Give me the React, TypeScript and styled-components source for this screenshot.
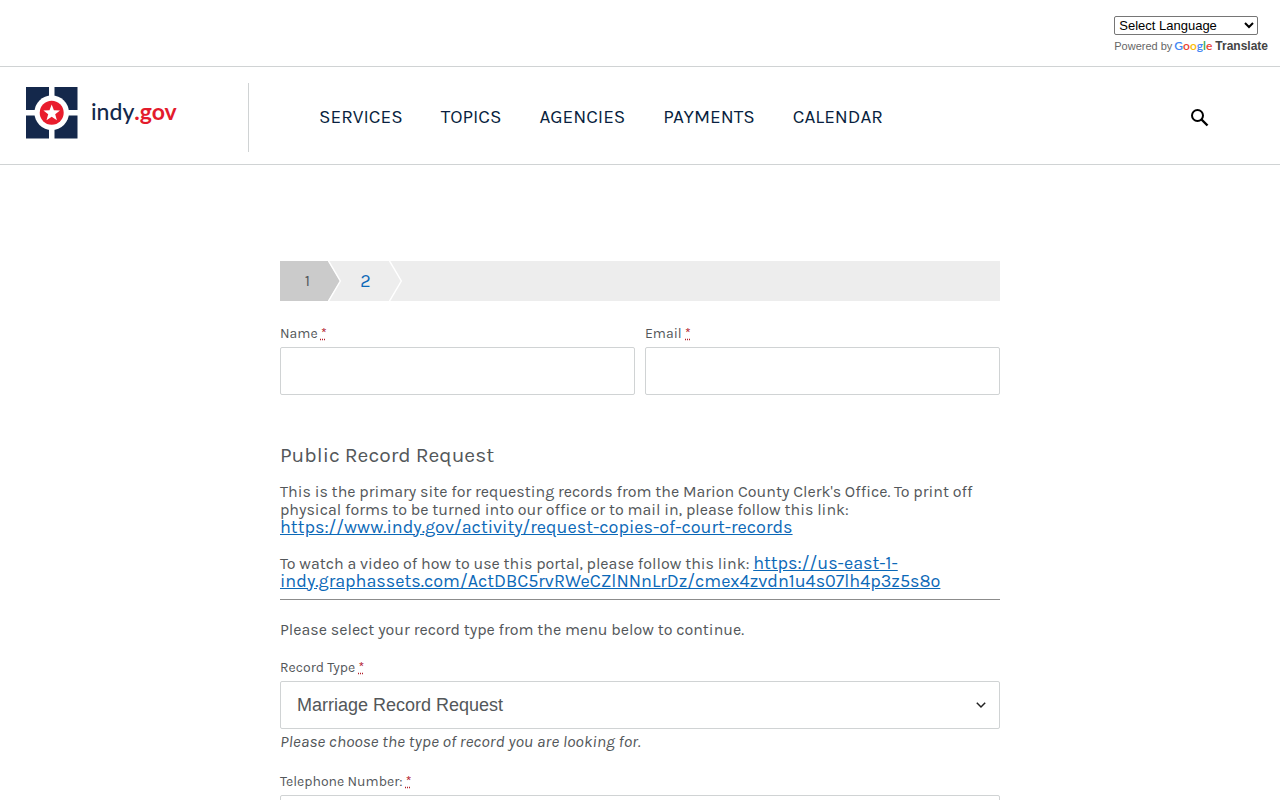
import React from "react";
import styled, { createGlobalStyle } from "styled-components";

const textFont = `Karla, Roboto, "Liberation Sans", sans-serif`;
const uiFont = `Arial, "Liberation Sans", sans-serif`;

const GlobalStyle = createGlobalStyle`
  *, *::before, *::after { box-sizing: border-box; }
  body {
    margin: 0;
    background: #fff;
    color: #53575a;
    font-family: ${textFont};
    font-size: 16px;
    line-height: 18px;
  }
`;

const LanguageBar = styled.div`
  display: flex;
  justify-content: flex-end;
  height: 67px;
  padding: 16px 12px 0 0;
  border-bottom: 1px solid #d0d3d4;
`;

const Translate = styled.div`
  display: flex;
  flex-direction: column;
  align-items: flex-start;
  gap: 3px;
  font-family: ${uiFont};
`;

const LanguageSelect = styled.select`
  width: 144px;
  height: 19px;
  padding: 0;
  border: 1px solid #767676;
  border-radius: 2px;
  background: #fff;
  color: #000;
  font-family: ${uiFont};
  font-size: 13px;
`;

const PoweredBy = styled.div`
  display: flex;
  align-items: baseline;
  height: 15px;
  color: #666;
  font-size: 11px;
  line-height: 15px;
  white-space: nowrap;
`;

const TranslateLink = styled.a`
  display: flex;
  align-items: baseline;
  gap: 3px;
  margin-left: 2px;
  color: #444;
  font-size: 12px;
  font-weight: bold;
  text-decoration: none;
`;

const GoogleWord = styled.span`
  font-family: Lato, sans-serif;
  font-size: 12px;
  font-weight: 600;
`;

const Letter = styled.span<{ $color: string }>`
  color: ${(p) => p.$color};
`;

const Header = styled.header`
  display: flex;
  align-items: center;
  height: 98px;
  padding: 3px 71px 0 25px;
  border-bottom: 1px solid #d0d3d4;
`;

const Brand = styled.a`
  display: flex;
  align-items: center;
  gap: 13px;
  width: 224px;
  height: 69px;
  padding-bottom: 10px;
  border-right: 1px solid #d0d3d4;
  text-decoration: none;
`;

const BrandName = styled.span`
  padding-bottom: 2px;
  color: #14284b;
  font-family: Lato, sans-serif;
  font-size: 23px;
  font-weight: 500;
  line-height: 30px;
`;

const BrandSuffix = styled.span`
  color: #e31b2c;
  font-weight: 700;
`;

const Nav = styled.nav`
  display: flex;
  flex: 1;
  gap: 38px;
  padding-left: 70px;
`;

const NavLink = styled.a`
  color: #091f40;
  font-size: 19px;
  line-height: 24px;
  text-decoration: none;
`;

const SearchButton = styled.button`
  display: flex;
  padding: 0;
  border: 0;
  background: none;
  color: #000;
`;

const Page = styled.main`
  width: 100%;
  max-width: 760px;
  margin: 0 auto;
  padding: 96px 20px 40px;
`;

const Steps = styled.ol`
  display: flex;
  height: 40px;
  margin: 0 0 24px;
  padding: 0;
  background: #ededed;
  list-style: none;
`;

const Step = styled.li<{ $current?: boolean }>`
  display: flex;
  color: ${(p) => (p.$current ? "#53575a" : "#0c69b8")};
  font-size: ${(p) => (p.$current ? 16 : 18)}px;
`;

const StepLabel = styled.button<{ $current?: boolean }>`
  width: 48px;
  padding: ${(p) => (p.$current ? "0 0 0 7px" : "0 0 0 1px")};
  border: 0;
  background: ${(p) => (p.$current ? "#cbcbcb" : "#ededed")};
  color: inherit;
  font: inherit;
`;

const Row = styled.div`
  display: grid;
  grid-template-columns: 1fr 1fr;
  gap: 10px;
  margin-bottom: 48px;
`;

const Field = styled.div`
  display: flex;
  flex-direction: column;
`;

const Label = styled.label`
  margin-bottom: 5px;
  font-size: 14px;
  line-height: 17px;
`;

const Required = styled.abbr`
  color: #b3202c;
  text-decoration: underline dotted #b3202c;
`;

const TextInput = styled.input`
  width: 100%;
  height: 48px;
  padding: 0 16px;
  border: 1px solid #d0d3d4;
  border-radius: 2px;
  background: #fff;
  color: #53575a;
  font-family: ${uiFont};
  font-size: 18px;
`;

const SelectBox = styled.div`
  display: grid;
  align-items: center;
  > * { grid-area: 1 / 1; }
  > svg { justify-self: end; margin-right: 14px; pointer-events: none; }
`;

const Dropdown = styled.select`
  appearance: none;
  width: 100%;
  height: 48px;
  padding: 0 16px;
  border: 1px solid #d0d3d4;
  border-radius: 2px;
  background: #fff;
  color: #53575a;
  font-family: ${uiFont};
  font-size: 18px;
`;

const Hint = styled.em`
  margin: 3px 0 23px;
  font-size: 17px;
`;

const Title = styled.h3`
  margin: 0 0 16px;
  font-size: 21px;
  font-weight: 400;
  line-height: 24px;
`;

const Paragraph = styled.p`
  margin: 0 0 18px;
`;

const TextLink = styled.a`
  color: #0c69b8;
  font-size: 18px;
  line-height: 16px;
`;

const Intro = styled.section`
  padding-bottom: 8px;
  border-bottom: 1px solid #8c8c8c;
  ${Paragraph}:last-child { margin-bottom: 0; }
`;

const Prompt = styled.p`
  margin: 21px 0 20px;
`;

function StepArrow({ current }: { current?: boolean }) {
  return (
    <svg width="13" height="40" viewBox="0 0 13 40" aria-hidden="true">
      <path d="M0 0L12 20L0 40Z" fill={current ? "#cbcbcb" : "#ededed"} />
      <path d="M0 -1L12.300 20L0 41" fill="none" stroke="#fff" strokeWidth="1.400" />
    </svg>
  );
}

function Seal() {
  return (
    <svg width="53" height="53" viewBox="0 0 53 53" aria-hidden="true">
      <path d="M1 1H24V24H1ZM29.500 1H52.500V24H29.500ZM1 29.500H24V52.500H1ZM29.500 29.500H52.500V52.500H29.500Z" fill="#14284b" />
      <circle cx="26.700" cy="26.700" r="17.300" fill="#fff" />
      <circle cx="26.700" cy="26.700" r="12" fill="#e91d2d" />
      <path d="M26.700 18.500L28.900 24.200L35 24.500L30.200 28.300L31.900 34.200L26.700 30.800L21.500 34.200L23.200 28.300L18.400 24.500L24.500 24.200Z" fill="#fff" />
    </svg>
  );
}

const navItems = ["Services", "Topics", "Agencies", "Payments", "Calendar"];
const google: [string, string][] = [
  ["G", "#4285f4"], ["o", "#ea4335"], ["o", "#fbbc05"],
  ["g", "#4285f4"], ["l", "#34a853"], ["e", "#ea4335"],
];

const Mark = () => <Required title="required">*</Required>;

export default function App() {
  return (
    <>
      <GlobalStyle />
      <LanguageBar>
        <Translate>
          <LanguageSelect aria-label="Language Translate Widget">
            <option>Select Language</option>
          </LanguageSelect>
          <PoweredBy>
            Powered by
            <TranslateLink href="#translate">
              <GoogleWord>
                {google.map(([ch, color], i) => (
                  <Letter key={i} $color={color}>{ch}</Letter>
                ))}
              </GoogleWord>
              Translate
            </TranslateLink>
          </PoweredBy>
        </Translate>
      </LanguageBar>
      <Header>
        <Brand href="#home">
          <Seal />
          <BrandName>indy<BrandSuffix>.gov</BrandSuffix></BrandName>
        </Brand>
        <Nav>
          {navItems.map((item) => (
            <NavLink key={item} href={`#${item.toLowerCase()}`}>{item.toUpperCase()}</NavLink>
          ))}
        </Nav>
        <SearchButton aria-label="Search">
          <svg width="19" height="19" viewBox="0 0 19 19" fill="none" stroke="currentColor" aria-hidden="true">
            <circle cx="7.500" cy="7.500" r="5.500" strokeWidth="2" />
            <path d="M11.500 11.500L17.500 17.500" strokeWidth="2.400" />
          </svg>
        </SearchButton>
      </Header>
      <Page>
        <form>
          <Steps>
            <Step $current>
              <StepLabel type="button" $current aria-current="step">1</StepLabel>
              <StepArrow current />
            </Step>
            <Step>
              <StepLabel type="button">2</StepLabel>
              <StepArrow />
            </Step>
          </Steps>
          <Row>
            <Field>
              <Label htmlFor="name">Name <Mark /></Label>
              <TextInput id="name" type="text" />
            </Field>
            <Field>
              <Label htmlFor="email">Email <Mark /></Label>
              <TextInput id="email" type="email" />
            </Field>
          </Row>
          <Intro>
            <Title>Public Record Request</Title>
            <Paragraph>
              This is the primary site for requesting records from the Marion County Clerk's Office. To print off
              physical forms to be turned into our office or to mail in, please follow this link:{" "}
              <TextLink href="#copies">https://www.indy.gov/activity/request-copies-of-court-records</TextLink>
            </Paragraph>
            <Paragraph>
              To watch a video of how to use this portal, please follow this link:{" "}
              <TextLink href="#video">https://us-east-1-indy.graphassets.com/ActDBC5rvRWeCZlNNnLrDz/cmex4zvdn1u4s07lh4p3z5s8o</TextLink>
            </Paragraph>
          </Intro>
          <Prompt>Please select your record type from the menu below to continue.</Prompt>
          <Field>
            <Label htmlFor="record-type">Record Type <Mark /></Label>
            <SelectBox>
              <Dropdown id="record-type">
                <option>Marriage Record Request</option>
              </Dropdown>
              <svg width="10" height="8" viewBox="0 0 10 8" fill="none" stroke="#222" strokeWidth="1.500" aria-hidden="true">
                <path d="M0.800 1.800L5 6L9.200 1.800" />
              </svg>
            </SelectBox>
            <Hint>Please choose the type of record you are looking for.</Hint>
          </Field>
          <Field>
            <Label htmlFor="phone">Telephone Number: <Mark /></Label>
            <TextInput id="phone" type="tel" />
          </Field>
        </form>
      </Page>
    </>
  );
}
